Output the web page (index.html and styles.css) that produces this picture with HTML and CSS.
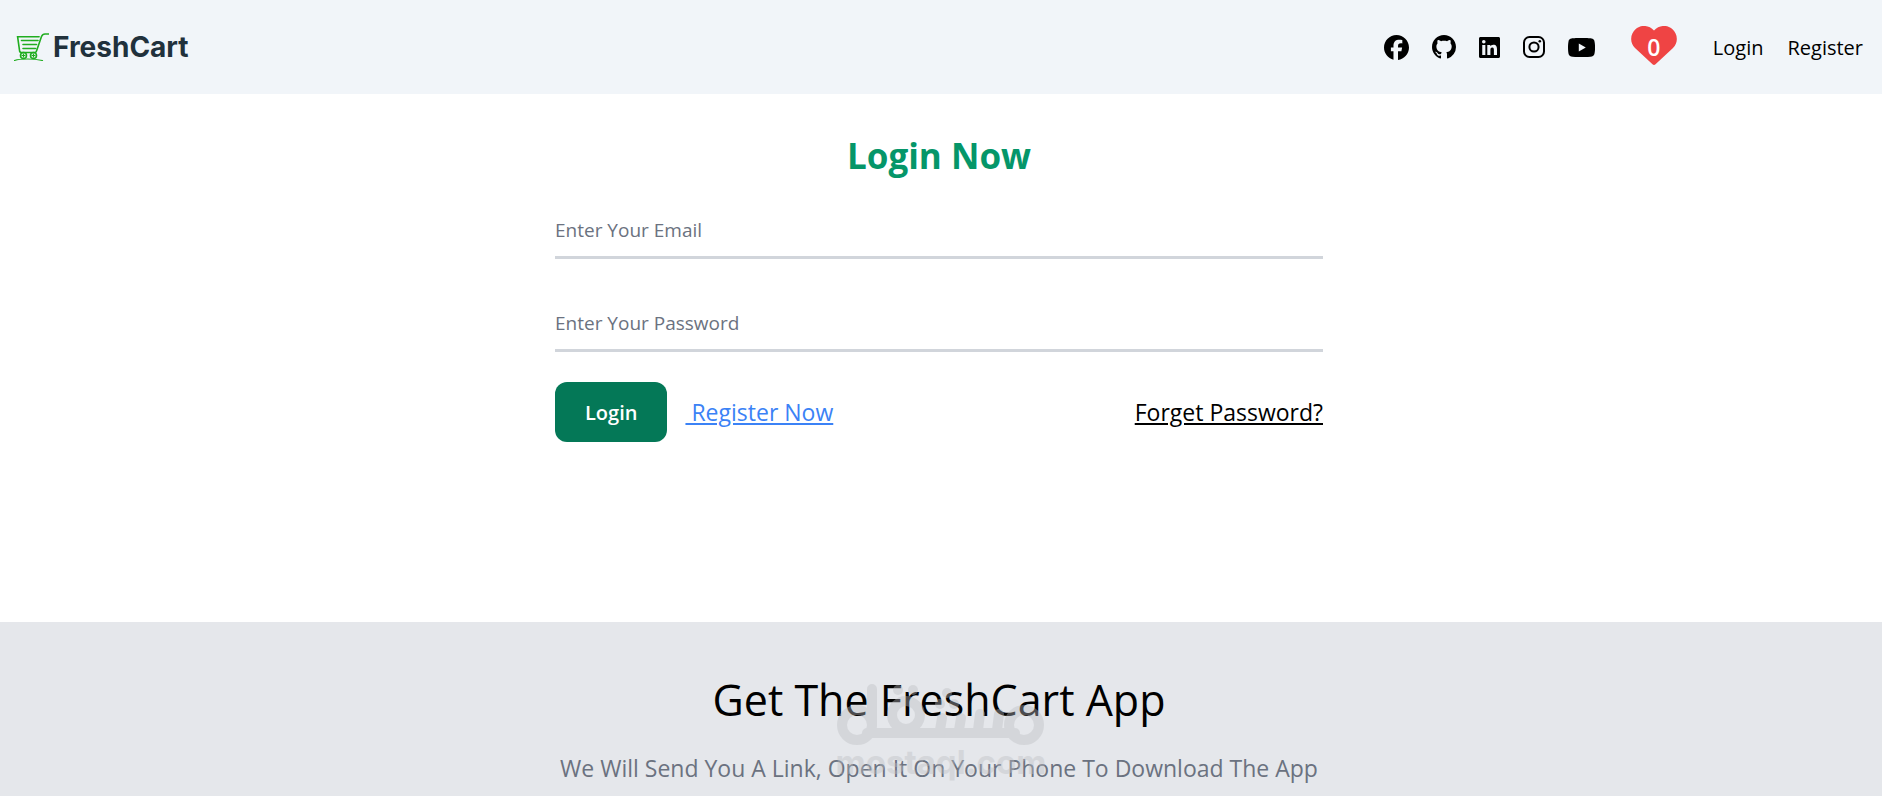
FILE: index.html
```html
<!DOCTYPE html>
<html lang="en">
<head>
    <meta charset="UTF-8">
    <meta name="viewport" content="width=device-width, initial-scale=1.0">
    <title>FreshCart - Login</title>
    <link rel="stylesheet" href="styles.css">
</head>
<body>
    <nav class="navbar">
        <a href="#" class="logo">
            <svg class="logo-cart" viewBox="0 0 35 28" aria-hidden="true">
                <path d="M34.500 1h-3.500q-2.500 0-3.500 2.500l-5 14.500q-.5 1.500-1.500 1.500H7.500q-1.500 0-1.800-1L3.600 3.700h21.500M7.500 7.500h16.500M9 11.500h13.500M9 15.500h12.500"/>
                <circle cx="9.500" cy="22.500" r="3"/>
                <circle cx="19.500" cy="22.500" r="3"/>
                <path class="thin" d="M8 22.500h3M9.500 21v3M18 22.500h3M19.500 21v3M.5 27.500q4.500-1.500 13-1.500t15 1.500"/>
            </svg>
            <span>FreshCart</span>
        </a>
        <div class="nav-right">
            <div class="social">
                <a href="#" aria-label="Facebook">
                    <svg width="25" height="25" viewBox="0 0 512 512"><path d="M512 256C512 114.600 397.400 0 256 0S0 114.600 0 256c0 120 82.700 220.800 194.200 248.500V334.200h-52.800V256h52.800v-33.700c0-87.100 39.400-127.500 125-127.500 16.200 0 44.200 3.200 55.700 6.400V172c-6-.6-16.500-1-29.600-1-42 0-58.200 15.900-58.200 57.200V256h83.600l-14.400 78.200h-69.300v175.900C413.800 494.800 512 386.900 512 256z"/></svg>
                </a>
                <a href="#" aria-label="GitHub">
                    <svg width="24" height="24" viewBox="0 0 16 16"><path d="M8 0C3.580 0 0 3.580 0 8c0 3.540 2.290 6.530 5.470 7.590.4.070.55-.17.55-.38 0-.19-.01-.82-.01-1.490-2.010.37-2.530-.49-2.690-.94-.09-.23-.48-.94-.82-1.130-.28-.15-.68-.52-.01-.53.63-.01 1.080.58 1.230.82.720 1.210 1.870.87 2.330.66.070-.52.280-.87.510-1.070-1.780-.2-3.640-.89-3.640-3.950 0-.87.31-1.590.82-2.150-.08-.2-.36-1.020.080-2.120 0 0 .67-.21 2.200.82.640-.18 1.320-.27 2-.27s1.360.09 2 .27c1.530-1.040 2.200-.82 2.200-.82.440 1.100.160 1.920.080 2.120.51.56.82 1.270.82 2.150 0 3.070-1.870 3.750-3.650 3.950.29.25.54.73.54 1.480 0 1.070-.01 1.930-.01 2.200 0 .21.150.46.55.38A8.010 8.010 0 0 0 16 8c0-4.420-3.580-8-8-8z"/></svg>
                </a>
                <a href="#" aria-label="LinkedIn">
                    <svg width="21" height="21" viewBox="0 0 448 448"><path d="M416 0H31.900C14.300 0 0 14.500 0 32.300v383.400C0 433.500 14.300 448 31.900 448H416c17.600 0 32-14.500 32-32.300V32.300C448 14.500 433.600 0 416 0zM135.400 384H69V170.200h66.500V384zM102.200 64a38.500 38.500 0 1 1 0 77 38.500 38.500 0 0 1 0-77zm282.100 320h-66.400V280c0-24.800-.5-56.700-34.500-56.700-34.600 0-39.900 27-39.900 54.900V384h-66.400V170.200h63.700v29.200h.9c8.900-16.800 30.600-34.500 62.900-34.500 67.200 0 79.700 44.300 79.700 101.900V384z"/></svg>
                </a>
                <a href="#" aria-label="Instagram">
                    <svg width="22" height="22" viewBox="0 0 22 22"><rect x="1" y="1" width="20" height="20" rx="5.500" fill="none" stroke="#000" stroke-width="2"/><circle cx="11" cy="11" r="4.600" fill="none" stroke="#000" stroke-width="2"/><circle cx="16.800" cy="5.200" r="1.300"/></svg>
                </a>
                <a href="#" aria-label="YouTube">
                    <svg width="27" height="19" viewBox="0 0 27 19"><path fill-rule="evenodd" d="M13.500 0C20 0 22.500.2 24 .6c1.300.4 2.100 1.200 2.400 2.400.9 3.500.9 9.500 0 13-.3 1.200-1.100 2-2.400 2.400-3 .8-18 .8-21 0C1.700 18 .9 17.200.6 16c-.8-3.500-.8-9.500 0-13C.9 1.800 1.700 1 3 .6 4.500.2 7 0 13.500 0zM10.800 5.400v8.200l7-4.100z"/></svg>
                </a>
            </div>
            <a href="#" class="wishlist" aria-label="Wishlist">
                <svg width="46" height="42" viewBox="0 0 46 42"><path fill="#ef4444" d="M23 4.500C28-1 36-1.500 41 2.800c6 5 6.500 13.700 1 19.200L24.500 38.300q-1.500 1.400-3 0L4 22C-1.500 16.500-1 7.800 5 2.800 10-1.500 18-1 23 4.500z"/></svg>
                <span class="wishlist-count">0</span>
            </a>
            <div class="nav-links">
                <a href="#">Login</a>
                <a href="#">Register</a>
            </div>
        </div>
    </nav>

    <main class="login">
        <h1>Login Now</h1>
        <form class="login-form">
            <input type="email" id="email" placeholder="Enter Your Email" aria-label="Enter Your Email">
            <input type="password" id="password" placeholder="Enter Your Password" aria-label="Enter Your Password">
            <div class="actions">
                <button type="button" class="login-button">Login</button>
                <a href="#" class="register-link">&nbsp;Register Now</a>
                <a href="#" class="forget-link">Forget Password?</a>
            </div>
        </form>
    </main>

    <footer class="footer">
        <h2>Get The FreshCart App</h2>
        <p>We Will Send You A Link, Open It On Your Phone To Download The App</p>
        <div class="watermark">
            <svg width="208" height="62" viewBox="0 0 208 62" aria-hidden="true">
                <g fill="none" stroke="#bdbfc3" stroke-width="10" stroke-linecap="round">
                    <circle cx="20" cy="41" r="15"/>
                    <path d="M35 5v36M30 49h148M103 46l2-12M122 46l2-12M141 46l2-16M160 46l2-16"/>
                    <circle cx="69" cy="31" r="14"/>
                    <circle cx="187" cy="41" r="15"/>
                </g>
                <g fill="#bdbfc3">
                    <circle cx="61" cy="6" r="5"/>
                    <circle cx="76" cy="6" r="5"/>
                    <circle cx="103" cy="20" r="5"/>
                    <circle cx="117" cy="20" r="5"/>
                    <circle cx="110" cy="9" r="5"/>
                </g>
            </svg>
            <span>mostaql.com</span>
        </div>
    </footer>
</body>
</html>
```
FILE: styles.css
```css
* {
    box-sizing: border-box;
}

body {
    margin: 0;
    min-height: 100vh;
    display: flex;
    flex-direction: column;
    background: #fff;
    color: #000;
    font-family: "Segoe UI", "Open Sans", sans-serif;
    font-size: 20px;
    overflow: hidden;
}

a {
    color: inherit;
    text-decoration: none;
}

svg {
    display: block;
}

/* ===== Navbar ===== */
.navbar {
    display: flex;
    justify-content: space-between;
    align-items: center;
    height: 94px;
    padding: 0 19px 0 14px;
    background: #f1f5f9;
}

.logo {
    display: flex;
    align-items: center;
    gap: 4px;
    font-family: Inter, sans-serif;
    font-size: 28px;
    font-weight: 700;
    line-height: 32px;
    color: #21313c;
}

.logo-cart {
    width: 35px;
    height: 28px;
    fill: none;
    stroke: #20ad20;
    stroke-width: 1.6;
    stroke-linecap: round;
}

.logo-cart .thin {
    stroke-width: 1.2;
}

.nav-right {
    display: flex;
    align-items: center;
    gap: 36px;
}

.social {
    display: flex;
    align-items: center;
    gap: 23px;
}

.wishlist {
    position: relative;
}

.wishlist-count {
    position: absolute;
    inset: 0;
    display: flex;
    justify-content: center;
    align-items: center;
    color: #fff;
    font-size: 23px;
    font-weight: 600;
}

.nav-links {
    display: flex;
    gap: 24px;
}

/* ===== Login form ===== */
.login {
    min-height: 528px;
    width: 100%;
    max-width: 772px;
    margin: 0 auto;
    padding: 36px 4px 0 0;
}

.login h1 {
    margin: 0;
    font-size: 35px;
    line-height: 52px;
    text-align: center;
    color: #059669;
}

.login-form {
    display: flex;
    flex-direction: column;
}

.login-form input {
    width: 100%;
    height: 53px;
    margin: 24px 0 16px;
    padding: 0 0 2px;
    border: none;
    border-bottom: 3px solid #d1d5db;
    background: transparent;
    font: inherit;
    font-size: 19px;
    outline: none;
}

.login-form input::placeholder {
    color: #6b7280;
    opacity: 1;
}

.actions {
    display: flex;
    align-items: center;
    gap: 18px;
    margin-top: 14px;
    font-size: 23px;
}

.login-button {
    height: 60px;
    padding: 0 30px;
    border: none;
    border-radius: 12px;
    background: #047857;
    color: #fff;
    font: inherit;
    font-size: 20px;
    font-weight: 600;
    cursor: pointer;
}

.register-link {
    color: #3b82f6;
    text-decoration: underline;
}

.forget-link {
    margin-left: auto;
    text-decoration: underline;
}

/* ===== Footer ===== */
.footer {
    position: relative;
    flex: 1;
    padding: 48px 4px 0 0;
    background: #e5e7eb;
    text-align: center;
}

.footer h2 {
    margin: 0;
    font-size: 43px;
    font-weight: 400;
    line-height: 60px;
}

.footer p {
    margin: 20px 0 0;
    font-size: 23px;
    line-height: 36px;
    color: #6b7280;
}

.watermark {
    position: absolute;
    top: 62px;
    left: 0;
    right: 0;
    display: flex;
    flex-direction: column;
    align-items: center;
    opacity: 0.4;
    font-family: Inter, sans-serif;
    font-size: 33px;
    font-weight: 700;
    line-height: 32px;
    color: #bdbfc3;
    pointer-events: none;
}
```
